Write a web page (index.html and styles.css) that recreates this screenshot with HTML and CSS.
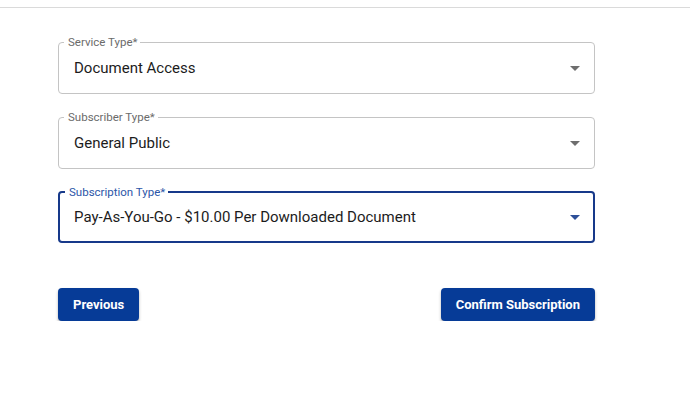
FILE: index.html
```html
<!DOCTYPE html>
<html lang="en">
<head>
    <meta charset="UTF-8">
    <meta name="viewport" content="width=device-width, initial-scale=1.0">
    <title>Subscription</title>
    <link rel="stylesheet" href="styles.css">
</head>
<body>
    <div class="top-bar"></div>
    <form class="sub-form">
        <fieldset class="field">
            <legend>Service Type*</legend>
            <div class="field-value">
                <span>Document Access</span>
                <svg class="caret" width="10" height="5" viewBox="0 0 10 5"><path d="M0 0h10L5 5z"/></svg>
            </div>
        </fieldset>
        <fieldset class="field">
            <legend>Subscriber Type*</legend>
            <div class="field-value">
                <span>General Public</span>
                <svg class="caret" width="10" height="5" viewBox="0 0 10 5"><path d="M0 0h10L5 5z"/></svg>
            </div>
        </fieldset>
        <fieldset class="field focused">
            <legend>Subscription Type*</legend>
            <div class="field-value">
                <span>Pay-As-You-Go - $10.00 Per Downloaded Document</span>
                <svg class="caret" width="10" height="5" viewBox="0 0 10 5"><path d="M0 0h10L5 5z"/></svg>
            </div>
        </fieldset>
        <div class="actions">
            <button type="button" class="btn">Previous</button>
            <button type="button" class="btn">Confirm Subscription</button>
        </div>
    </form>
</body>
</html>
```
FILE: styles.css
```css
:root {
    --navy: #063b97;
    --focus: #17398a;
    --label: #6b6b6b;
    --border: #c4c4c4;
    --text: #1c1c1c;
}
body {
    margin: 0;
    background: #fff;
    font-family: Roboto, "Liberation Sans", sans-serif;
    color: var(--text);
}
.top-bar {
    height: 7px;
    border-bottom: 1px solid #dadada;
}

/* --- Form --- */
.sub-form {
    width: 537px;
    margin-left: 58px;
    padding-top: 28px;
    display: flex;
    flex-direction: column;
    gap: 17px;
}
.field {
    margin: 0;
    padding: 0 14px 0 15px;
    border: 1px solid var(--border);
    border-radius: 4px;
    min-width: 0;
}
.field legend {
    font-size: 11.5px;
    line-height: 12px;
    color: var(--label);
    padding: 0 3px 0 4px;
    margin-left: -10px;
}
.field-value {
    display: flex;
    align-items: center;
    justify-content: space-between;
    height: 40px;
    padding-bottom: 5px;
    font-size: 15px;
}
.caret { fill: #6e6e6e; margin-right: 0; }
.field.focused {
    border: 2px solid var(--focus);
    padding: 0 13px 0 14px;
}
.field.focused legend { color: #2c56a8; margin-left: -9px; }
.field.focused .field-value { height: 38px; }
.field.focused .caret { fill: #2c4f98; }

/* --- Buttons --- */
.actions {
    display: flex;
    justify-content: space-between;
    margin-top: 28px;
}
.btn {
    background: var(--navy);
    color: #fff;
    border: none;
    border-radius: 4px;
    height: 33px;
    padding: 0 15px;
    font-family: Roboto, "Liberation Sans", sans-serif;
    font-weight: 700;
    font-size: 13px;
    box-shadow: 0 2px 3px rgba(0, 0, 0, 0.3);
    cursor: pointer;
}
```
